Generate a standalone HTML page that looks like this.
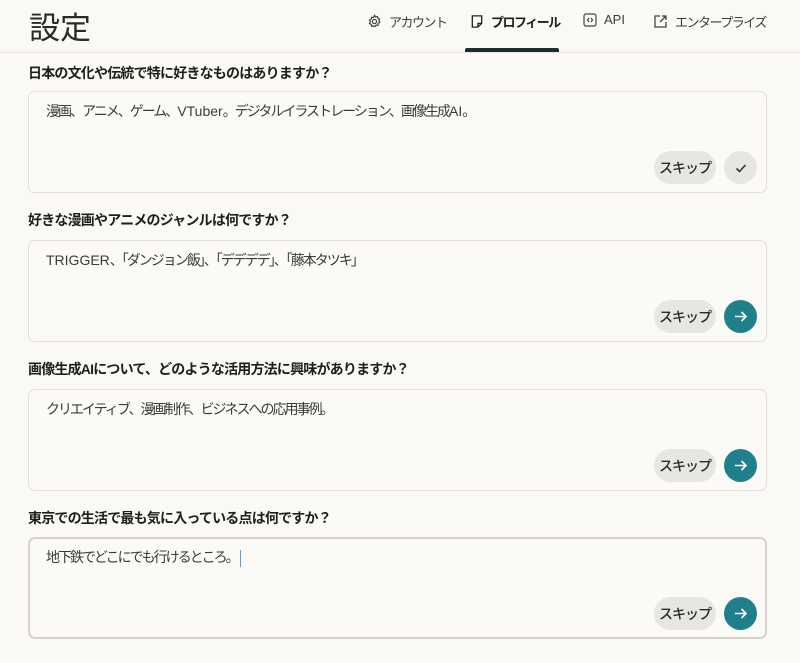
<!DOCTYPE html>
<html><head><meta charset="utf-8"><style>
*{box-sizing:border-box;margin:0;padding:0}
body{width:800px;height:663px;background:#faf9f5;font-family:"Liberation Sans","Noto Sans CJK JP",sans-serif;color:#1f1e1d;position:relative;overflow:hidden}
.hdr{position:absolute;left:0;top:0;width:800px;height:53px;border-bottom:1px solid #e6e4dd}
.title{position:absolute;left:29px;top:3px;font-size:31px;font-weight:400;color:#2a2a28}
.tab{position:absolute;top:12px;font-size:13px;letter-spacing:-1.5px;color:#3d3d3a;display:flex;align-items:center;gap:7px}
.tab.act{font-weight:700;color:#1f1e1d}
.ul{position:absolute;left:465px;top:48px;width:94px;height:4px;background:#1f2b2e;border-radius:2px 2px 0 0}
.q{position:absolute;left:28px;font-size:14px;letter-spacing:-0.8px;font-weight:700;color:#1f1e1d}
.box{position:absolute;left:28px;width:739px;height:102px;border:1px solid #e2e0d8;border-radius:7px;background:#fbfaf7}
.box.f{border:2px solid #d4d2cb}
.txt{position:absolute;left:17px;top:9px;font-size:14px;letter-spacing:-2px;color:#3b3b38}
.txt b{font-weight:400;letter-spacing:0}
.skip{position:absolute;right:50px;bottom:8px;width:62px;height:33px;border-radius:17px;background:#e8e6e1;font-size:14px;letter-spacing:-1px;font-weight:500;display:flex;align-items:center;justify-content:center;color:#2a2a28}
.go{position:absolute;right:9px;bottom:8px;width:33px;height:33px;border-radius:50%;background:#1f7f8a;display:flex;align-items:center;justify-content:center}
.go.g{background:#e8e6e1}
.f .skip{right:49px;bottom:7px}.f .go{right:8px;bottom:7px}
.f .txt{left:16px;top:8px}
</style></head><body>
<div class="hdr">
<div class="title">設定</div>
<div class="tab" style="left:367px"><svg width="15" height="15" viewBox="0 0 16 16" fill="none" stroke="#444" stroke-width="1.3"><circle cx="8" cy="8" r="2.2"/><path d="M8 1.5l1.2 1.6 2-.5.4 2 1.9.8-.8 1.9 1 1.7-1.8 1-.2 2-2-.1-1.3 1.6L7 12.8l-2 .3-.5-2-1.8-1 .9-1.8-.9-1.8 1.8-1 .5-2 2 .3z"/></svg>アカウント</div>
<div class="tab act" style="left:470px"><svg width="14" height="15" viewBox="0 0 14 16" fill="none" stroke="#222" stroke-width="1.4"><path d="M2 2h10v8l-4 4H2z M8 14v-4h4"/></svg>プロフィール</div>
<div class="tab" style="left:583px;letter-spacing:0"><svg width="14" height="14" viewBox="0 0 14 14" fill="none" stroke="#444" stroke-width="1.2"><rect x="1" y="1" width="12" height="12" rx="2"/><path d="M6 5L4.5 7 6 9M8 5l1.5 2L8 9"/></svg>API</div>
<div class="tab" style="left:653px"><svg width="15" height="15" viewBox="0 0 15 15" fill="none" stroke="#444" stroke-width="1.3"><path d="M7 2H2v11h11V8M9 2h4v4M13 2L7 8"/></svg>エンタープライズ</div>
<div class="ul"></div>
</div>

<div class="q" style="top:63px">日本の文化や伝統で特に好きなものはありますか？</div>
<div class="box" style="top:91px"><div class="txt">漫画、アニメ、ゲーム、<b>VTuber</b>。デジタルイラストレーション、画像生成<b>AI</b>。</div><div class="skip">スキップ</div><div class="go g"><svg width="14" height="14" viewBox="0 0 14 14" fill="none" stroke="#333" stroke-width="1.6"><path d="M2.5 7.5l3 3 6-6.5"/></svg></div></div>

<div class="q" style="top:210px">好きな漫画やアニメのジャンルは何ですか？</div>
<div class="box" style="top:240px"><div class="txt"><b>TRIGGER</b>、「ダンジョン飯」、「デデデデ」、「藤本タツキ」</div><div class="skip">スキップ</div><div class="go"><svg width="15" height="15" viewBox="0 0 15 15" fill="none" stroke="#fff" stroke-width="1.6"><path d="M2 7.5h11M8.5 3l4.5 4.5L8.5 12"/></svg></div></div>

<div class="q" style="top:359px">画像生成AIについて、どのような活用方法に興味がありますか？</div>
<div class="box" style="top:389px"><div class="txt">クリエイティブ、漫画制作、ビジネスへの応用事例。</div><div class="skip">スキップ</div><div class="go"><svg width="15" height="15" viewBox="0 0 15 15" fill="none" stroke="#fff" stroke-width="1.6"><path d="M2 7.5h11M8.5 3l4.5 4.5L8.5 12"/></svg></div></div>

<div class="q" style="top:508px">東京での生活で最も気に入っている点は何ですか？</div>
<div class="box f" style="top:537px"><div class="txt">地下鉄でどこにでも行けるところ。<span style="display:inline-block;width:1px;height:17px;background:#5aa0d0;vertical-align:middle;margin-left:2px"></span></div><div class="skip">スキップ</div><div class="go"><svg width="15" height="15" viewBox="0 0 15 15" fill="none" stroke="#fff" stroke-width="1.6"><path d="M2 7.5h11M8.5 3l4.5 4.5L8.5 12"/></svg></div></div>
</body></html>
